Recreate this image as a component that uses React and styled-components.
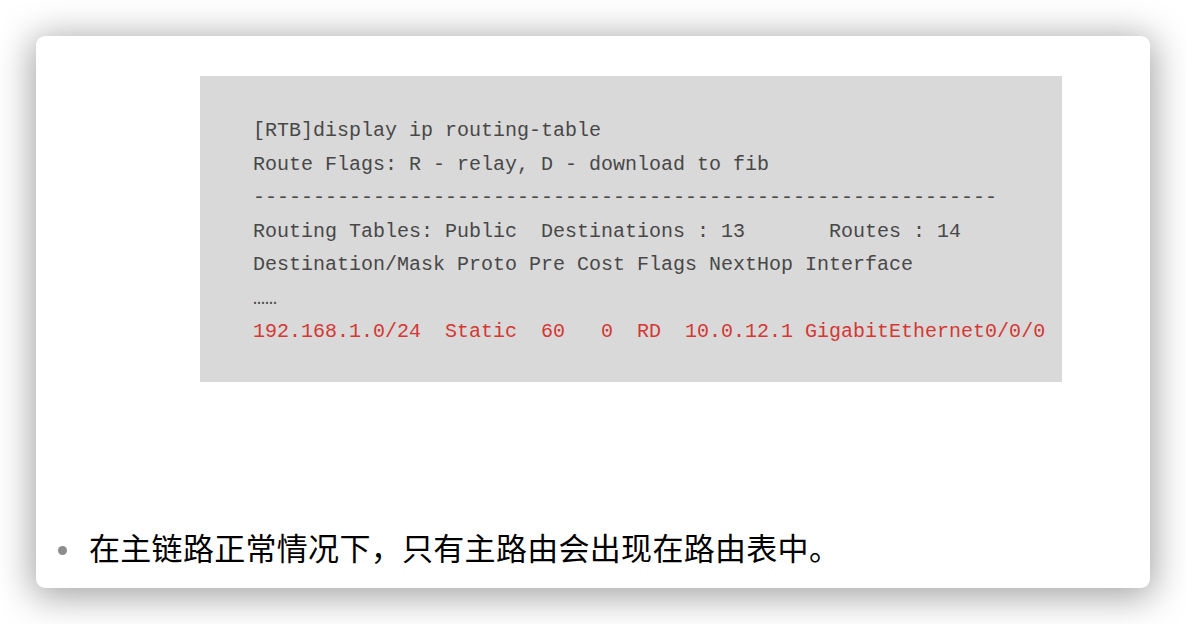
import styled, { createGlobalStyle } from "styled-components";

const GlobalStyle = createGlobalStyle`
    html, body {
        margin: 0;
        padding: 0;
        background: #fff;
    }
`

const Page = styled.div`
    width: 1186px;
    height: 624px;
    box-sizing: border-box;
    padding: 36px;
    background: #fff;
`

const Card = styled.div`
    width: 1114px;
    height: 552px;
    box-sizing: border-box;
    background: #fff;
    border-radius: 9px;
    box-shadow: 0px 5px 36px 4px rgba(0, 0, 0, 0.36);
    display: flex;
    flex-direction: column;
    padding-top: 40px;
    padding-bottom: 20px;
`

const CodeBox = styled.div`
    width: 862px;
    height: 306px;
    box-sizing: border-box;
    margin-left: 164px;
    background: rgb(217, 217, 217);
    padding: 38px 0 0 53px;
`

const CodeLine = styled.div`
    font-family: "Liberation Mono", "Courier New", monospace;
    font-size: 20px;
    line-height: 33.5px;
    height: 33.5px;
    white-space: pre;
    color: ${props => props.$red ? "rgb(212, 56, 52)" : "rgb(72, 72, 72)"};
`

const BulletList = styled.ul`
    margin: auto 0 0 0;
    padding: 0 0 0 22px;
    list-style: none;
`

const BulletItem = styled.li`
    display: flex;
    align-items: center;
    gap: 22px;
    font-family: "Noto Sans CJK SC", "Noto Sans", sans-serif;
    font-size: 31px;
    line-height: 42px;
    letter-spacing: 0.3px;
    color: #000;
`

const Dot = styled.span`
    width: 9px;
    height: 9px;
    border-radius: 50%;
    background: rgb(140, 140, 140);
    flex-shrink: 0;
    margin-top: 6px;
`

const lines = [
    { text: "[RTB]display ip routing-table" },
    { text: "Route Flags: R - relay, D - download to fib" },
    { text: "-".repeat(62) },
    { text: "Routing Tables: Public  Destinations : 13       Routes : 14" },
    { text: "Destination/Mask Proto Pre Cost Flags NextHop Interface" },
    { text: "……" },
    { text: "192.168.1.0/24  Static  60   0  RD  10.0.12.1 GigabitEthernet0/0/0", red: true },
]

export default function App() {
    return (
        <Page>
            <GlobalStyle />
            <Card>
                <CodeBox>
                    {lines.map((l, i) => (
                        <CodeLine key={i} $red={l.red}>{l.text}</CodeLine>
                    ))}
                </CodeBox>
                <BulletList>
                    <BulletItem>
                        <Dot />
                        在主链路正常情况下，只有主路由会出现在路由表中。
                    </BulletItem>
                </BulletList>
            </Card>
        </Page>
    )
}
